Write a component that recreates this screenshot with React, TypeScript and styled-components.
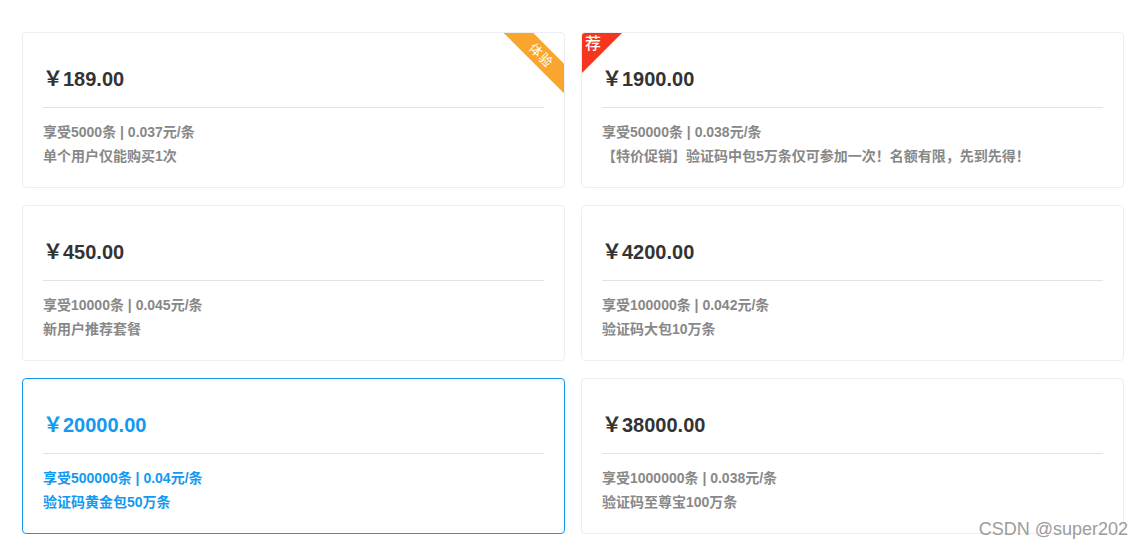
import styled, { createGlobalStyle } from "styled-components"

const GlobalStyle = createGlobalStyle`
    html, body {
        margin: 0;
        padding: 0;
        background: #fff;
    }
    body {
        font-family: "Liberation Sans", "Noto Sans CJK SC", sans-serif;
    }
`

const blue = "#1499f0"

const Page = styled.div`
    position: relative;
    width: 1141px;
    height: 550px;
    box-sizing: border-box;
    padding: 32px 17px 0 22px;
    overflow: hidden;
`

const Grid = styled.div`
    display: grid;
    grid-template-columns: 543px 543px;
    column-gap: 16px;
    row-gap: 17px;
`

const Card = styled.div<{ $active?: boolean }>`
    position: relative;
    height: 156px;
    box-sizing: border-box;
    padding: 0 20px;
    border: 1px solid ${p => (p.$active ? blue : "#ebeef3")};
    border-radius: 4px;
    background: #fff;
    overflow: hidden;
    color: ${p => (p.$active ? blue : "#888")};
`

const Head = styled.div`
    height: 75px;
    box-sizing: border-box;
    padding-top: 34px;
    border-bottom: 1px solid #e2e2e2;
`

const Price = styled.div<{ $active?: boolean }>`
    font-size: 20px;
    line-height: 24px;
    font-weight: bold;
    color: ${p => (p.$active ? blue : "#333")};
`

const Body = styled.div`
    padding-top: 12px;
    font-size: 14px;
    line-height: 24px;
    font-weight: 600;
`

const Line = styled.div`
    white-space: nowrap;
`

const RibbonBox = styled.div`
    position: absolute;
    top: 0;
    right: 0;
    width: 60px;
    height: 60px;
    overflow: hidden;
`

const Ribbon = styled.div`
    position: absolute;
    top: 12px;
    right: -22px;
    width: 90px;
    height: 21px;
    transform: rotate(45deg);
    background: #f9a52e;
    color: #fff;
    font-size: 13px;
    line-height: 21px;
    text-align: center;
    letter-spacing: 1px;
`

const Corner = styled.div`
    position: absolute;
    top: 0;
    left: 0;
    width: 0;
    height: 0;
    border-top: 40px solid #f5361d;
    border-right: 40px solid transparent;
`

const CornerText = styled.span`
    position: absolute;
    top: 1px;
    left: 3px;
    color: #fff;
    font-size: 16px;
    line-height: 20px;
    font-weight: 500;
`

const Watermark = styled.div`
    position: absolute;
    right: 13px;
    bottom: 10px;
    font-size: 18px;
    color: #9c9c9c;
`

type Pack = {
    price: string
    info: string
    desc: string
    tag?: "trial" | "hot"
    active?: boolean
}

const packs: Pack[] = [
    { price: "￥189.00", info: "享受5000条 | 0.037元/条", desc: "单个用户仅能购买1次", tag: "trial" },
    { price: "￥1900.00", info: "享受50000条 | 0.038元/条", desc: "【特价促销】验证码中包5万条仅可参加一次！名额有限，先到先得！", tag: "hot" },
    { price: "￥450.00", info: "享受10000条 | 0.045元/条", desc: "新用户推荐套餐" },
    { price: "￥4200.00", info: "享受100000条 | 0.042元/条", desc: "验证码大包10万条" },
    { price: "￥20000.00", info: "享受500000条 | 0.04元/条", desc: "验证码黄金包50万条", active: true },
    { price: "￥38000.00", info: "享受1000000条 | 0.038元/条", desc: "验证码至尊宝100万条" },
]

export default function App() {
    return (
        <>
            <GlobalStyle />
            <Page>
                <Grid>
                    {packs.map(p => (
                        <Card key={p.price} $active={p.active}>
                            {p.tag === "trial" && (
                                <RibbonBox>
                                    <Ribbon>体验</Ribbon>
                                </RibbonBox>
                            )}
                            {p.tag === "hot" && (
                                <>
                                    <Corner />
                                    <CornerText>荐</CornerText>
                                </>
                            )}
                            <Head>
                                <Price $active={p.active}>{p.price}</Price>
                            </Head>
                            <Body>
                                <Line>{p.info}</Line>
                                <Line>{p.desc}</Line>
                            </Body>
                        </Card>
                    ))}
                </Grid>
                <Watermark>CSDN @super202</Watermark>
            </Page>
        </>
    )
}
